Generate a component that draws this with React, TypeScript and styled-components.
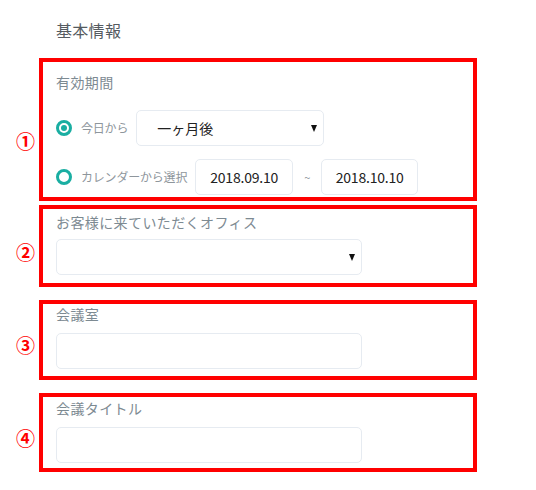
import React from "react";
import styled, { createGlobalStyle } from "styled-components";

const Global = createGlobalStyle`
  html, body { margin: 0; padding: 0; background: #fff; }
  body { font-family: "Noto Sans CJK JP", "Noto Sans", sans-serif; }
  * { box-sizing: border-box; }
`;

const Page = styled.div`
  width: 536px;
  height: 490px;
  padding-top: 18px;
  display: flex;
  flex-direction: column;
`;

const Heading = styled.h1`
  margin: 0 0 16px 56px;
  font-size: 16px;
  line-height: 24px;
  font-weight: 400;
  color: #555b61;
  letter-spacing: 0.3px;
`;

const Row = styled.div<{ $mt: number }>`
  display: flex;
  margin-top: ${(p) => p.$mt}px;
`;

const NumberCol = styled.div<{ $shift: number }>`
  width: 39px;
  display: flex;
  align-items: center;
  justify-content: flex-end;
  padding-right: 4px;
  padding-top: ${(p) => p.$shift * 2}px;
`;

const Num = styled.span`
  color: #ff0000;
  font-size: 19px;
  font-weight: 700;
  line-height: 20px;
`;

const Box = styled.section<{ $pt: number; $pb: number; $h: number }>`
  width: 438px;
  height: ${(p) => p.$h}px;
  border: 4px solid #ff0000;
  padding: ${(p) => p.$pt}px 0 ${(p) => p.$pb}px 13px;
  display: flex;
  flex-direction: column;
`;

const Label = styled.div<{ $mb: number }>`
  font-size: 14px;
  line-height: 20px;
  color: #7d8a92;
  letter-spacing: 0.4px;
  margin-bottom: ${(p) => p.$mb}px;
`;

const OptionRow = styled.div<{ $mb?: number }>`
  display: flex;
  align-items: center;
  margin-bottom: ${(p) => p.$mb ?? 0}px;
`;

const Radio = styled.span<{ $checked?: boolean }>`
  width: 16px;
  height: 16px;
  border-radius: 50%;
  border: 3px solid #1aaea2;
  display: flex;
  align-items: center;
  justify-content: center;
  flex: none;
  &::after {
    content: "";
    width: 6px;
    height: 6px;
    border-radius: 50%;
    background: ${(p) => (p.$checked ? "#1aaea2" : "transparent")};
  }
`;

const RadioText = styled.span`
  margin-left: 9px;
  margin-right: 8px;
  font-size: 12px;
  line-height: 16px;
  color: #8e969c;
  letter-spacing: -0.2px;
  white-space: nowrap;
`;

const Field = styled.div<{ $w: number }>`
  width: ${(p) => p.$w}px;
  height: 36px;
  border: 1px solid #e6ebf1;
  border-radius: 5px;
  background: #fff;
  display: flex;
  align-items: center;
  font-size: 14px;
  color: #222;
  flex: none;
`;

const SelectField = styled(Field)`
  justify-content: space-between;
  padding: 0 6px 0 20px;
`;

const DateField = styled(Field)`
  justify-content: center;
  letter-spacing: -0.2px;
`;

const Arrow = styled.span`
  width: 0;
  height: 0;
  border-left: 3.5px solid transparent;
  border-right: 3.5px solid transparent;
  border-top: 7px solid #111;
  margin-top: 1px;
`;

const Tilde = styled.span`
  width: 28px;
  text-align: center;
  font-size: 11px;
  color: #8e969c;
`;

export default function App() {
  return (
    <Page>
      <Global />
      <Heading>基本情報</Heading>

      <Row $mt={0}>
        <NumberCol $shift={11}>
          <Num>①</Num>
        </NumberCol>
        <Box $pt={10} $pb={2} $h={143}>
          <Label $mb={18}>有効期間</Label>
          <OptionRow $mb={13}>
            <Radio $checked />
            <RadioText>今日から</RadioText>
            <SelectField $w={188}>
              <span>一ヶ月後</span>
              <Arrow />
            </SelectField>
          </OptionRow>
          <OptionRow>
            <Radio />
            <RadioText>カレンダーから選択</RadioText>
            <DateField $w={98}>2018.09.10</DateField>
            <Tilde>~</Tilde>
            <DateField $w={97}>2018.10.10</DateField>
          </OptionRow>
        </Box>
      </Row>

      <Row $mt={4}>
        <NumberCol $shift={6}>
          <Num>②</Num>
        </NumberCol>
        <Box $pt={3} $pb={8} $h={82}>
          <Label $mb={7}>お客様に来ていただくオフィス</Label>
          <SelectField $w={306}>
            <span />
            <Arrow />
          </SelectField>
        </Box>
      </Row>

      <Row $mt={13}>
        <NumberCol $shift={5}>
          <Num>③</Num>
        </NumberCol>
        <Box $pt={0} $pb={7} $h={80}>
          <Label $mb={9}>会議室</Label>
          <Field $w={306} />
        </Box>
      </Row>

      <Row $mt={13}>
        <NumberCol $shift={5}>
          <Num>④</Num>
        </NumberCol>
        <Box $pt={1} $pb={5} $h={79}>
          <Label $mb={9}>会議タイトル</Label>
          <Field $w={306} />
        </Box>
      </Row>
    </Page>
  );
}
